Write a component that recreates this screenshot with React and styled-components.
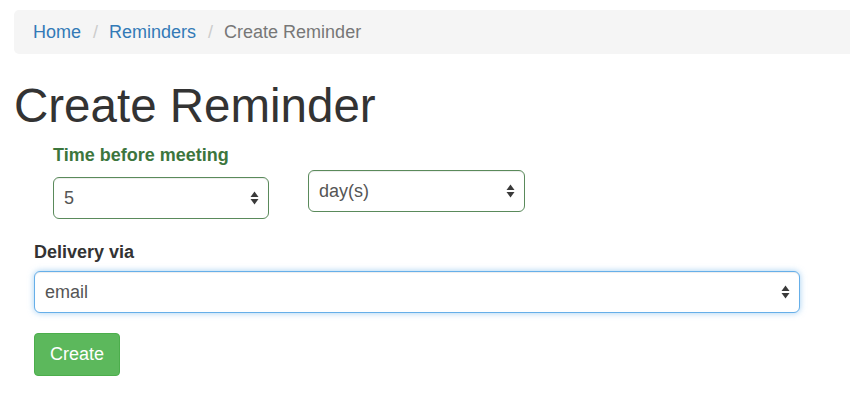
import React from 'react'
import styled, { createGlobalStyle } from 'styled-components'

const GlobalStyle = createGlobalStyle`
  html, body {
    margin: 0;
    padding: 0;
    background: #ffffff;
    overflow: hidden;
  }
  body {
    font-family: "Liberation Sans", Arial, sans-serif;
    color: #333333;
  }
`

const Page = styled.div`
  padding: 10px 0 0 14px;
`

const Breadcrumb = styled.ol`
  display: flex;
  align-items: center;
  list-style: none;
  margin: 0 -30px 0 0;
  padding: 0 19px;
  height: 44px;
  background: #f5f5f5;
  border-radius: 5px;
  font-size: 18px;

  li + li::before {
    content: '/';
    color: #cccccc;
    padding: 0 11px 0 12px;
  }
`

const Crumb = styled.li`
  color: ${(p) => (p.active ? '#777777' : '#337ab7')};
`

const Title = styled.h1`
  margin: 26px 0 0 0;
  font-size: 47.5px;
  font-weight: 500;
  line-height: 1.1;
  color: #333333;
`

const Form = styled.form`
  display: flex;
  flex-direction: column;
  margin-top: 13px;
`

const TimeRow = styled.div`
  display: flex;
  align-items: flex-start;
  gap: 39px;
  padding-left: 39px;
`

const Group = styled.div`
  display: flex;
  flex-direction: column;
  margin-top: ${(p) => p.offset || 0}px;
`

const Label = styled.label`
  font-size: 18px;
  font-weight: 700;
  line-height: 21.6px;
  color: ${(p) => (p.success ? '#3c763d' : '#333333')};
  margin-bottom: ${(p) => p.gap ?? 10}px;
`

const SelectWrap = styled.div`
  position: relative;
  width: ${(p) => p.width}px;
`

const Select = styled.select`
  appearance: none;
  -webkit-appearance: none;
  box-sizing: border-box;
  width: 100%;
  height: 42px;
  padding: 0 30px 0 10px;
  font-family: "Liberation Sans", Arial, sans-serif;
  font-size: 18px;
  color: #555555;
  background: #ffffff;
  border-radius: 6px;
  outline: none;
  border: 1px solid ${(p) => (p.tone === 'focus' ? '#66afe9' : '#5a8a5b')};
  box-shadow: ${(p) =>
    p.tone === 'focus'
      ? 'inset 0 1px 1px rgba(0,0,0,.075), 0 0 6px rgba(102,175,233,.6)'
      : 'inset 0 1px 1px rgba(0,0,0,.075)'};
`

const Arrows = styled.svg`
  position: absolute;
  right: 10px;
  top: 50%;
  transform: translateY(-50%);
  pointer-events: none;
`

const SelectBox = ({ width, tone, value }) => (
  <SelectWrap width={width}>
    <Select tone={tone} defaultValue={value}>
      <option>{value}</option>
    </Select>
    <Arrows width="9" height="18" viewBox="0 0 9 18">
      <path d="M4.5 2.5 L8.5 8 L0.5 8 Z" fill="#3a3a3a" />
      <path d="M4.5 15.5 L8.5 10 L0.5 10 Z" fill="#3a3a3a" />
    </Arrows>
  </SelectWrap>
)

const Delivery = styled.div`
  display: flex;
  flex-direction: column;
  margin-top: 23px;
  padding-left: 20px;
`

const Button = styled.button`
  align-self: flex-start;
  margin-top: 20px;
  height: 43px;
  padding: 0 15px;
  font-family: "Liberation Sans", Arial, sans-serif;
  font-size: 18px;
  color: #ffffff;
  background: #5cb85c;
  border: 1px solid #4cae4c;
  border-radius: 4px;
`

const App = () => (
  <Page>
    <GlobalStyle />
    <Breadcrumb>
      <Crumb>Home</Crumb>
      <Crumb>Reminders</Crumb>
      <Crumb active>Create Reminder</Crumb>
    </Breadcrumb>
    <Title>Create Reminder</Title>
    <Form onSubmit={(e) => e.preventDefault()}>
      <TimeRow>
        <Group>
          <Label success>Time before meeting</Label>
          <SelectBox width={216} value="5" />
        </Group>
        <Group offset={25}>
          <SelectBox width={217} value="day(s)" />
        </Group>
      </TimeRow>
      <Delivery>
        <Label gap={8}>Delivery via</Label>
        <SelectBox width={766} tone="focus" value="email" />
        <Button type="submit">Create</Button>
      </Delivery>
    </Form>
  </Page>
)

export default App
